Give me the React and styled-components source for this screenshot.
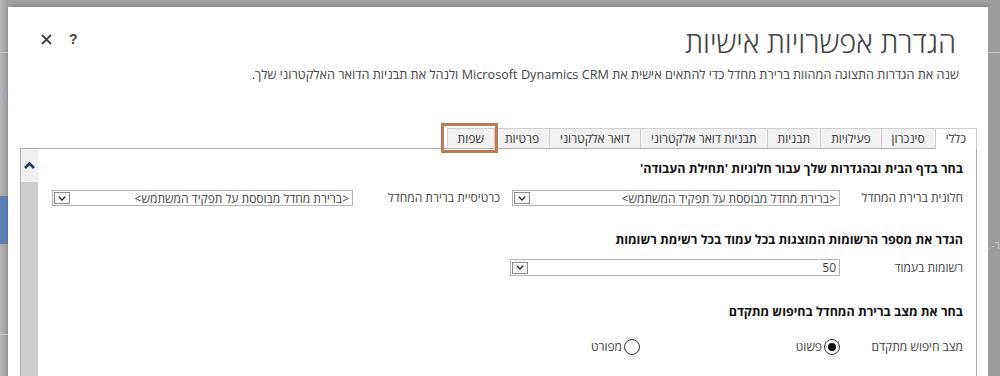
import React from "react";
import styled, { createGlobalStyle } from "styled-components";

const Global = createGlobalStyle`
  html, body {
    margin: 0;
    padding: 0;
    background: #a3a3a3;
    overflow: hidden;
  }
  body {
    font-family: "Segoe UI", "Open Sans", "Liberation Sans", "DejaVu Sans", sans-serif;
  }
`;

const tabs = [
  "כללי",
  "סינכרון",
  "פעילויות",
  "תבניות",
  "תבניות דואר אלקטרוני",
  "דואר אלקטרוני",
  "פרטיות",
  "שפות",
];

const Page = styled.div`
  display: flex;
  height: 376px;
  width: 1000px;
  overflow: hidden;
`;

const LeftStrip = styled.div`
  width: 8px;
  flex: none;
  padding-top: 7px;
  display: flex;
  flex-direction: column;
  background: linear-gradient(to right, #b9b9b9, #9d9d9d);
`;

const StripLine = styled.div`
  height: 1px;
  margin-top: ${(p) => p.top}px;
  background: #c9c9c9;
`;

const StripBlue = styled.div`
  height: 48px;
  margin-top: ${(p) => p.top}px;
  background: #5a7fb5;
`;

const StripText = styled.div`
  margin-top: ${(p) => p.top}px;
  font-size: 11px;
  line-height: 12px;
  color: ${(p) => p.color || "#8fb2d4"};
  white-space: nowrap;
  direction: rtl;
`;

const Dialog = styled.div`
  width: 980px;
  flex: none;
  margin-top: 7px;
  background: #fff;
  box-shadow: 2px 0 6px rgba(0, 0, 0, 0.35);
  direction: rtl;
  display: flex;
  flex-direction: column;
`;

const RightStrip = styled.div`
  flex: 1;
  padding-top: 52px;
  display: flex;
  flex-direction: column;
  background: #9c9c9c;
`;

const Header = styled.div`
  display: flex;
  justify-content: space-between;
  align-items: flex-start;
  padding: 15px 32px 0 0;
  height: 92px;
  box-sizing: border-box;
`;

const Titles = styled.div`
  display: flex;
  flex-direction: column;
`;

const Title = styled.h1`
  margin: 0;
  font-weight: 300;
  font-size: 29px;
  line-height: 39px;
  color: #444;
`;

const Subtitle = styled.p`
  margin: 4px -3px 0 0;
  font-size: 12.7px;
  line-height: 18px;
  color: #444;
`;

const Tools = styled.div`
  display: flex;
  align-items: center;
  gap: 17px;
  padding: 10px 0 0 33px;
  direction: ltr;
`;

const Help = styled.span`
  font-size: 14px;
  line-height: 14px;
  font-weight: 700;
  color: #444;
  font-family: "Liberation Sans", sans-serif;
`;

const Body = styled.div`
  flex: 1;
  display: flex;
  flex-direction: column;
  padding: 29px 11px 0 12px;
`;

const TabBar = styled.div`
  display: flex;
  height: 21px;
`;

const Tab = styled.div`
  position: relative;
  height: 20px;
  padding: 0 10px;
  box-sizing: border-box;
  border: 1px solid #cfcfcf;
  border-bottom: none;
  margin-left: -1px;
  background: ${(p) => (p.active ? "#fff" : "#f2f2f2")};
  font-size: 12px;
  line-height: 19px;
  color: #333;
  white-space: nowrap;
  z-index: ${(p) => (p.active ? 2 : 1)};
  ${(p) => p.active && "height: 21px;"}
`;

const Highlight = styled.div`
  position: absolute;
  top: -6px;
  bottom: -5px;
  left: -7px;
  right: -4px;
  border: 3px solid #bd7a50;
  pointer-events: none;
`;

const Panel = styled.div`
  flex: 1;
  display: flex;
  border: 1px solid #abadb3;
  border-bottom: none;
  margin-top: -1px;
`;

const Content = styled.div`
  flex: 1;
  padding: 12px 13px 0 14px;
  display: flex;
  flex-direction: column;
`;

const ScrollBar = styled.div`
  width: 17px;
  flex: none;
  background: #cdcdcd;
  display: flex;
  flex-direction: column;
`;

const ScrollButton = styled.div`
  height: 33px;
  background: #f0f0f0;
  display: flex;
  align-items: center;
  justify-content: center;
`;

const Section = styled.div`
  display: flex;
  flex-direction: column;
  margin-bottom: ${(p) => p.after}px;
`;

const Heading = styled.div`
  font-size: 12.5px;
  line-height: 16px;
  font-weight: 700;
  color: #111;
  margin-bottom: ${(p) => p.gap}px;
`;

const Row = styled.div`
  display: flex;
  gap: 12px;
`;

const Field = styled.div`
  width: ${(p) => p.width}px;
  display: flex;
  align-items: center;
`;

const Label = styled.div`
  width: ${(p) => p.width}px;
  flex: none;
  font-size: 12px;
  line-height: 16px;
  color: #444;
  white-space: nowrap;
`;

const Select = styled.div`
  flex: 1;
  height: ${(p) => p.h || 16}px;
  box-sizing: border-box;
  border: 1px solid #b4b4b4;
  display: flex;
  align-items: center;
  justify-content: space-between;
  padding-right: 3px;
  font-size: 12px;
  color: #444;
  white-space: nowrap;
  overflow: hidden;
`;

const DropButton = styled.div`
  width: 16px;
  height: 12px;
  margin-left: 1px;
  box-sizing: border-box;
  border: 1px solid #8c8c8c;
  background: #f4f4f4;
  display: flex;
  align-items: center;
  justify-content: center;
`;

const Radios = styled.div`
  display: flex;
`;

const RadioOption = styled.label`
  width: 200px;
  display: flex;
  align-items: center;
  gap: 2px;
  font-size: 12px;
  color: #444;
`;

const Circle = styled.span`
  width: 16px;
  height: 16px;
  box-sizing: border-box;
  border-radius: 50%;
  border: 1px solid #333;
  display: flex;
  align-items: center;
  justify-content: center;
  &::after {
    content: "";
    width: 8px;
    height: 8px;
    border-radius: 50%;
    background: ${(p) => (p.checked ? "#111" : "transparent")};
  }
`;

const Chevron = ({ up }) =>
  up ? (
    <svg width="11" height="7" viewBox="0 0 11 7">
      <polyline points="1,6 5.5,1.5 10,6" fill="none" stroke="#1f3a5f" strokeWidth="2.6" />
    </svg>
  ) : (
    <svg width="8" height="5" viewBox="0 0 8 5">
      <polyline points="0.8,0.8 4,4 7.2,0.8" fill="none" stroke="#333" strokeWidth="1.4" />
    </svg>
  );

const CloseIcon = () => (
  <svg width="11" height="11" viewBox="0 0 11 11">
    <path d="M1 1 L10 10 M10 1 L1 10" stroke="#444" strokeWidth="1.8" />
  </svg>
);

const Dropdown = ({ value, h }) => (
  <Select h={h}>
    <span>{value}</span>
    <DropButton>
      <Chevron />
    </DropButton>
  </Select>
);

export default function App() {
  return (
    <>
      <Global />
      <Page>
        <LeftStrip>
          <StripLine top={45} />
          <StripText top={36}>ה</StripText>
          <StripBlue top={95} />
          <StripLine top={90} />
        </LeftStrip>
        <Dialog>
          <Header>
            <Titles>
              <Title>הגדרת אפשרויות אישיות</Title>
              <Subtitle>
                שנה את הגדרות התצוגה המהוות ברירת מחדל כדי להתאים אישית את Microsoft Dynamics CRM ולנהל את תבניות הדואר האלקטרוני שלך.
              </Subtitle>
            </Titles>
            <Tools>
              <CloseIcon />
              <Help>?</Help>
            </Tools>
          </Header>
          <Body>
            <TabBar>
              {tabs.map((t, i) => (
                <Tab key={t} active={i === 0}>
                  {t}
                  {t === "שפות" && <Highlight />}
                </Tab>
              ))}
            </TabBar>
            <Panel>
              <Content>
                <Section after={26}>
                  <Heading gap={13}>בחר בדף הבית ובהגדרות שלך עבור חלוניות 'תחילת העבודה'</Heading>
                  <Row>
                    <Field width={451}>
                      <Label width={123}>חלונית ברירת המחדל</Label>
                      <Dropdown value="<ברירת מחדל מבוססת על תפקיד המשתמש>" />
                    </Field>
                    <Field width={448}>
                      <Label width={147}>כרטיסיית ברירת המחדל</Label>
                      <Dropdown value="<ברירת מחדל מבוססת על תפקיד המשתמש>" />
                    </Field>
                  </Row>
                </Section>
                <Section after={28}>
                  <Heading gap={11}>הגדר את מספר הרשומות המוצגות בכל עמוד בכל רשימת רשומות</Heading>
                  <Row>
                    <Field width={453}>
                      <Label width={123}>רשומות בעמוד</Label>
                      <Dropdown value="50" h={17} />
                    </Field>
                  </Row>
                </Section>
                <Section after={0}>
                  <Heading gap={18}>בחר את מצב ברירת המחדל בחיפוש מתקדם</Heading>
                  <Row>
                    <Field width={911}>
                      <Label width={123}>מצב חיפוש מתקדם</Label>
                      <Radios>
                        <RadioOption>
                          <Circle checked />
                          פשוט
                        </RadioOption>
                        <RadioOption>
                          <Circle />
                          מפורט
                        </RadioOption>
                      </Radios>
                    </Field>
                  </Row>
                </Section>
              </Content>
              <ScrollBar>
                <ScrollButton>
                  <Chevron up />
                </ScrollButton>
              </ScrollBar>
            </Panel>
          </Body>
        </Dialog>
        <RightStrip>
          <StripLine top={0} />
          <StripText top={186} color="#c8c8c8">ר-.</StripText>
        </RightStrip>
      </Page>
    </>
  );
}
